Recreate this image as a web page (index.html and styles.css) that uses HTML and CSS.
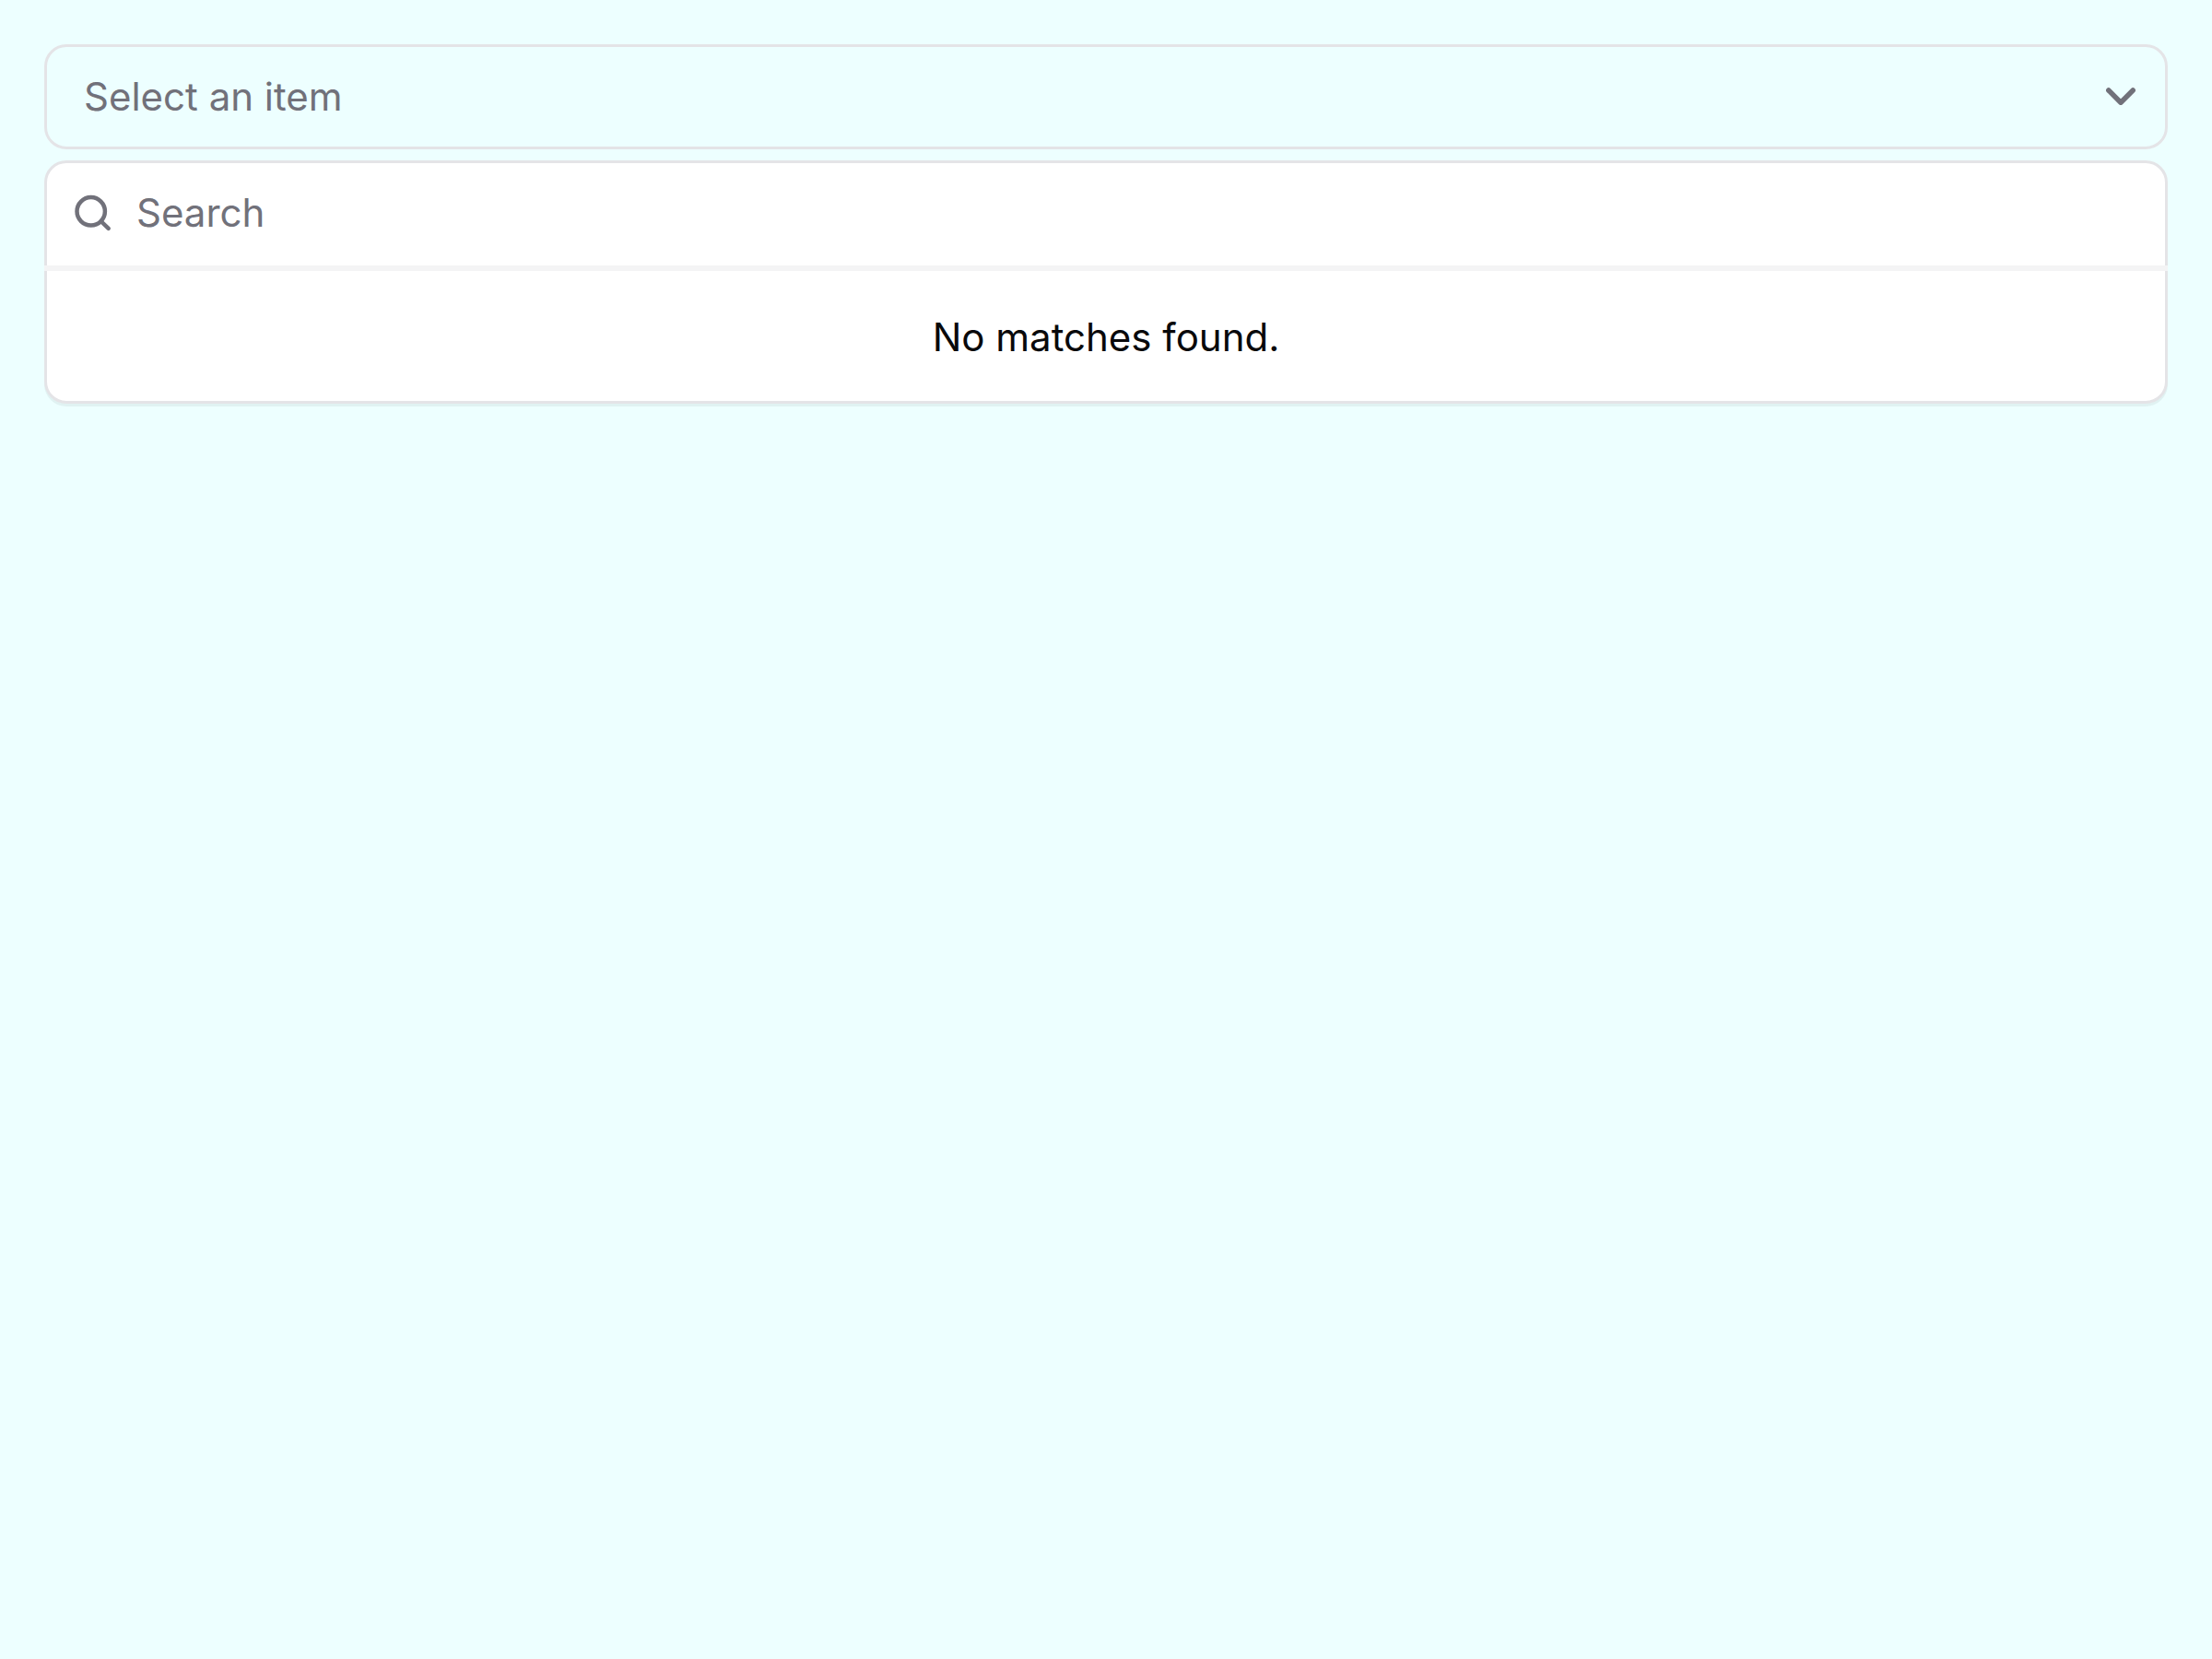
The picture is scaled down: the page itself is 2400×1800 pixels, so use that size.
FILE: index.html
```html
<!DOCTYPE html>
<html lang="en">
<head>
<meta charset="utf-8">
<meta name="viewport" content="width=device-width, initial-scale=1">
<title>Select an item</title>
<link rel="stylesheet" href="styles.css">
</head>
<body>
<main class="picker">
  <button class="trigger" type="button" aria-haspopup="listbox" aria-expanded="true">
    <span>Select an item</span>
    <svg class="trigger-icon" viewBox="0 0 36 24" aria-hidden="true"><path d="M4.800 5 18 18.200 31.200 5"/></svg>
  </button>
  <div class="menu">
    <label class="search">
      <svg class="search-icon" viewBox="0 0 42 42" aria-hidden="true"><circle cx="19.700" cy="19.300" r="15.200"/><path d="M30.500 30 38.700 37.900"/></svg>
      <input class="search-input" type="search" placeholder="Search" aria-label="Search">
    </label>
    <p class="empty">No matches found.</p>
  </div>
</main>
</body>
</html>
```
FILE: styles.css
```css
* {
  box-sizing: border-box;
}

body {
  margin: 0;
  padding: 48px;
  background: #edffff;
  color: #09090b;
  font-family: Inter, "Liberation Sans", sans-serif;
  font-size: 42px;
  line-height: 60px;
}

.picker {
  display: flex;
  flex-direction: column;
  gap: 12px;
}

.trigger {
  display: flex;
  align-items: center;
  justify-content: space-between;
  padding: 24px 30px 24px 40px;
  border: 3px solid #e4e4e7;
  border-radius: 24px;
  background: transparent;
  color: #71717a;
  font: inherit;
  text-align: left;
}

.trigger-icon {
  width: 36px;
  height: 24px;
  fill: none;
  stroke: #71717a;
  stroke-width: 5.5;
  stroke-linecap: round;
  stroke-linejoin: round;
}

.menu {
  border: 3px solid #e4e4e7;
  border-radius: 24px;
  background: #fff;
  box-shadow: 0 3px 0 rgba(0, 0, 0, 0.05);
}

/* The divider runs over the side borders of the menu. */
.search {
  display: flex;
  align-items: center;
  gap: 27px;
  margin: 0 -3px;
  padding: 24px 30px 27px 31px;
  border-bottom: 6px solid #f4f4f5;
}

.search-icon {
  flex: none;
  width: 42px;
  height: 42px;
  fill: none;
  stroke: #71717a;
  stroke-width: 4.5;
  stroke-linecap: round;
}

.search-input {
  flex: 1;
  min-width: 0;
  height: 60px;
  padding: 0;
  border: 0;
  outline: 0;
  background: transparent;
  color: inherit;
  font: inherit;
  appearance: none;
}

.search-input::placeholder {
  color: #71717a;
  opacity: 1;
}

.empty {
  margin: 0;
  padding: 42px 24px 39px;
  text-align: center;
}
```
